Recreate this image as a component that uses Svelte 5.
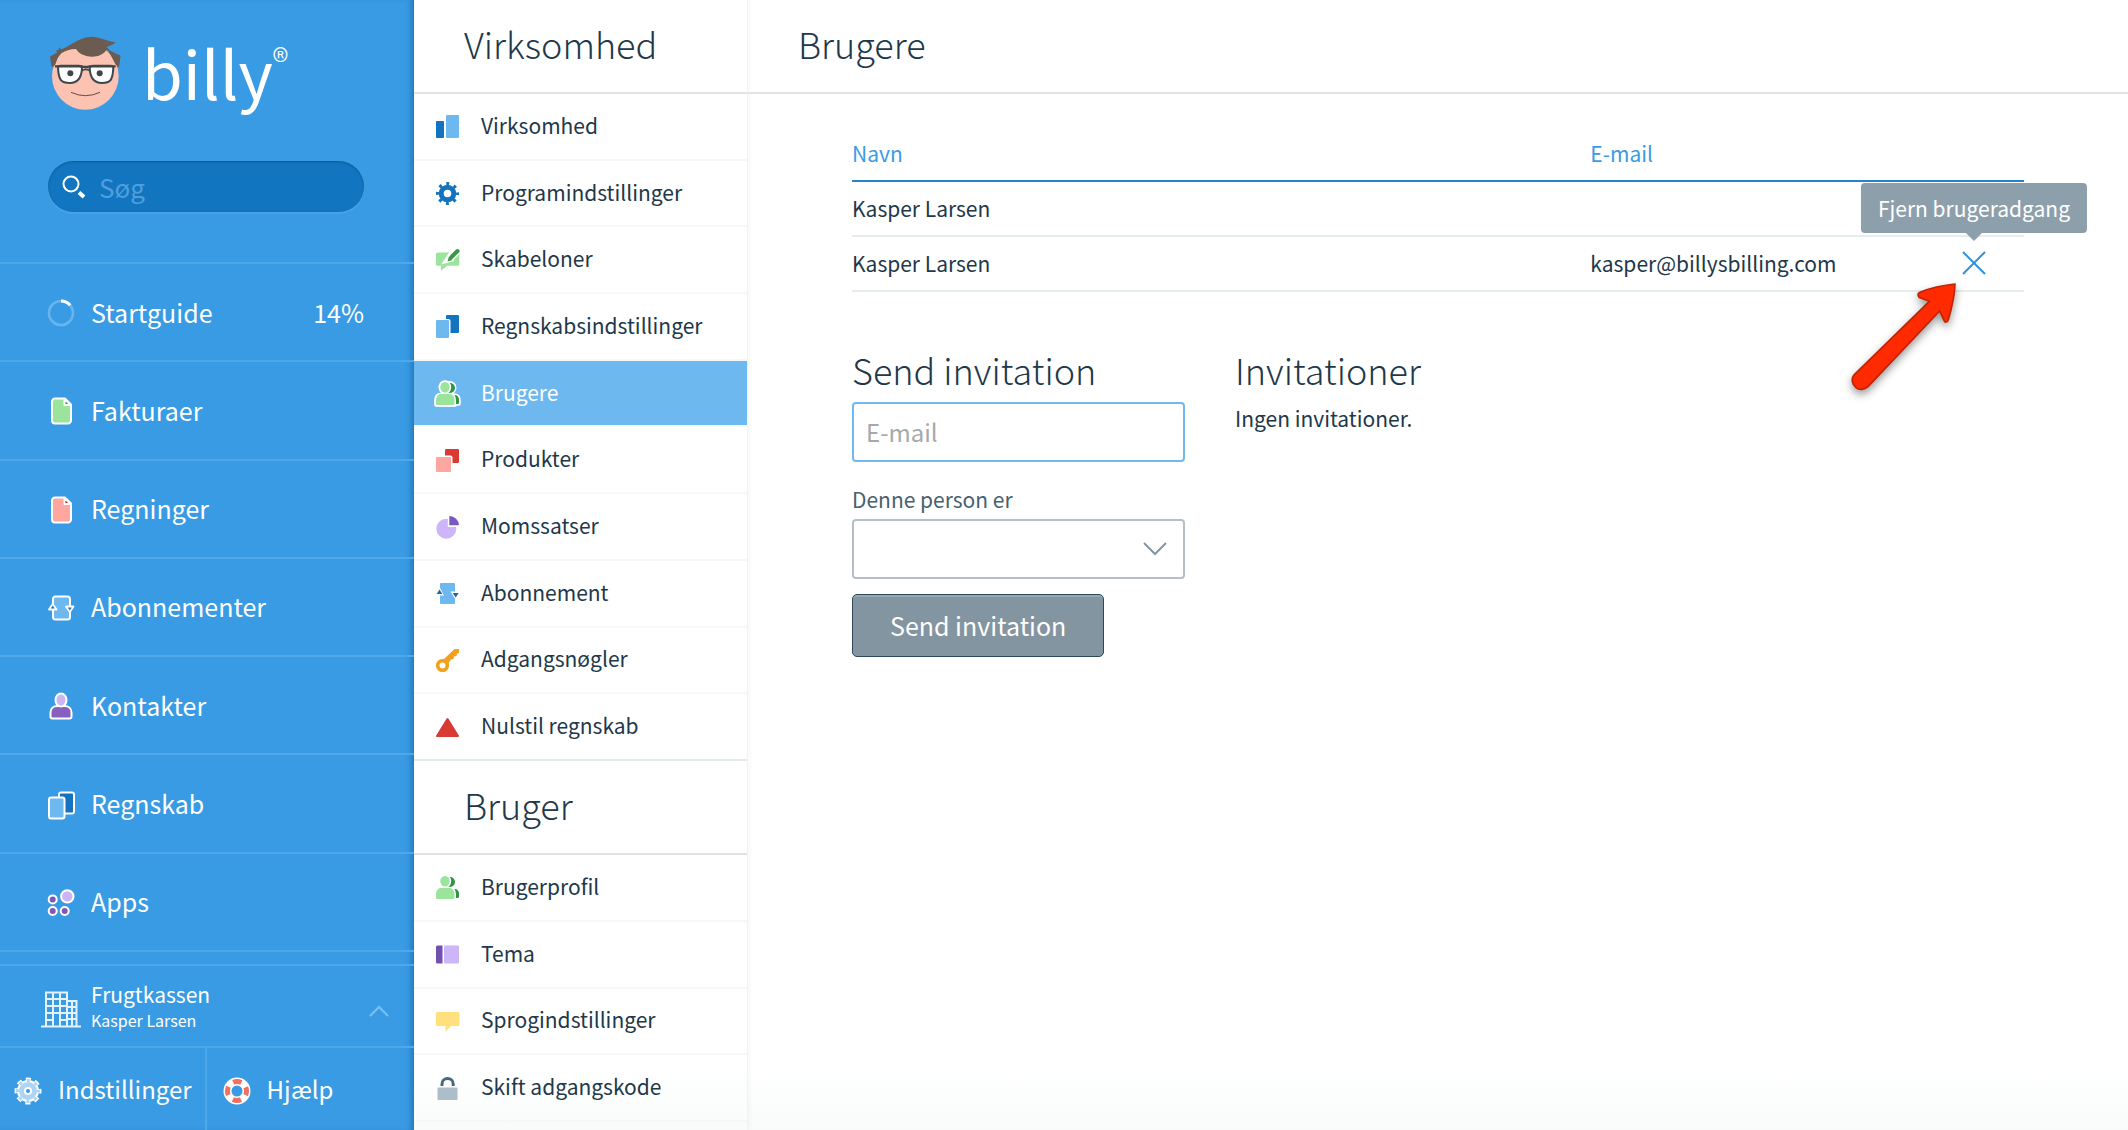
<script>
  const menu = [
    { icon: "progress", label: "Startguide", note: "14%" },
    { icon: "invoice", label: "Fakturaer" },
    { icon: "bill", label: "Regninger" },
    { icon: "subscriptions", label: "Abonnementer" },
    { icon: "contact", label: "Kontakter" },
    { icon: "accounting", label: "Regnskab" },
    { icon: "apps", label: "Apps" },
  ];

  const sections = [
    {
      title: "Virksomhed",
      items: [
        { icon: "company", label: "Virksomhed" },
        { icon: "cog", label: "Programindstillinger" },
        { icon: "templates", label: "Skabeloner" },
        { icon: "ledger", label: "Regnskabsindstillinger" },
        { icon: "users", label: "Brugere", active: true },
        { icon: "products", label: "Produkter" },
        { icon: "pie", label: "Momssatser" },
        { icon: "subscription", label: "Abonnement" },
        { icon: "key", label: "Adgangsnøgler" },
        { icon: "reset", label: "Nulstil regnskab" },
      ],
    },
    {
      title: "Bruger",
      items: [
        { icon: "users", label: "Brugerprofil" },
        { icon: "theme", label: "Tema" },
        { icon: "language", label: "Sprogindstillinger" },
        { icon: "lock", label: "Skift adgangskode" },
      ],
    },
  ];

  const users = [
    { name: "Kasper Larsen", email: "" },
    { name: "Kasper Larsen", email: "kasper@billysbilling.com", removable: true },
  ];

  let email = $state("");
  let role = $state("");
</script>

{#snippet page(fill, corner)}
  <path d="M9 2.5h10l6 6v16a3 3 0 0 1-3 3H9a3 3 0 0 1-3-3v-19a3 3 0 0 1 3-3z" fill={fill} stroke="#fff" stroke-width="2" />
  <path d="M18.500 3l6 6h-6z" fill={corner} stroke="#fff" stroke-width="2" stroke-linejoin="round" />
{/snippet}

{#snippet menuIcon(name)}
  <svg class="menu-icon" viewBox="0 0 30 30" aria-hidden="true">
    {#if name === "progress"}
      <circle cx="15" cy="15" r="12" fill="none" stroke="#68b5ee" stroke-width="2.600" />
      <path d="M15 3a12 12 0 0 1 9.200 4.300" fill="none" stroke="#fff" stroke-width="3.200" />
    {:else if name === "invoice"}
      {@render page("#9be49b", "#2f8f4a")}
    {:else if name === "bill"}
      {@render page("#fda7a0", "#c91f1f")}
    {:else if name === "subscriptions"}
      <rect x="7" y="3.500" width="17" height="23" rx="2.500" fill="#6cb8ef" stroke="#fff" stroke-width="2" />
      <path d="M3 16.500l3.700-5.500 3.800 5.500z M20 13.500h7.500l-3.700 5.500z" fill="#1272b8" stroke="#fff" stroke-width="1.800" stroke-linejoin="round" />
    {:else if name === "contact"}
      <path d="M4.500 25.500v-4c0-4 3-6.500 7-6.500h7c4 0 7 2.500 7 6.500v4a2 2 0 0 1-2 2h-17a2 2 0 0 1-2-2z" fill="#865fbf" stroke="#fff" stroke-width="2" />
      <ellipse cx="15" cy="9" rx="5.500" ry="6.500" fill="#ccb5f5" stroke="#fff" stroke-width="2" />
    {:else if name === "accounting"}
      <rect x="13" y="2.500" width="15" height="21" rx="2" fill="#1473bc" stroke="#fff" stroke-width="2" />
      <rect x="3" y="7.500" width="15.500" height="21" rx="2" fill="#6cb8ef" stroke="#fff" stroke-width="2" />
    {:else if name === "apps"}
      <g fill="#7f57b8" stroke="#fff" stroke-width="2">
        <circle cx="6.700" cy="11.400" r="4" />
        <circle cx="6.700" cy="23" r="4" />
        <circle cx="18.700" cy="23" r="4" />
        <circle cx="21.300" cy="8.400" r="6.200" fill="#ccb5f5" />
      </g>
    {:else if name === "settings"}
      <circle cx="15" cy="15" r="11.500" fill="none" stroke="#fff" stroke-width="4" stroke-dasharray="5 4.030" stroke-dashoffset="2.500" />
      <circle cx="15" cy="15" r="10" fill="#acd5f5" stroke="#fff" stroke-width="2" />
      <circle cx="15" cy="15" r="10.500" fill="none" stroke="#acd5f5" stroke-width="3" stroke-dasharray="3 5.247" stroke-dashoffset="1.500" />
      <circle cx="15" cy="15" r="3" fill="#3898e0" stroke="#fff" stroke-width="2" />
    {:else if name === "help"}
      <circle cx="15" cy="15" r="9.500" fill="none" stroke="#fff" stroke-width="8" />
      <circle cx="15" cy="15" r="9.500" fill="none" stroke="#f2705f" stroke-width="5" stroke-dasharray="8.400 6.522" stroke-dashoffset="4.200" />
    {/if}
  </svg>
{/snippet}

{#snippet settingIcon(name, outlined)}
  <svg class="setting-icon" class:outlined viewBox="0 0 24 24" aria-hidden="true">
    {#if name === "company"}
      <rect x="0" y="6" width="8" height="17" rx="1" fill="#1473bf" />
      <rect x="10" y="0" width="13" height="23" rx="1" fill="#6cb8ef" />
    {:else if name === "cog"}
      <circle cx="11.500" cy="11.500" r="6.300" fill="none" stroke="#1473bf" stroke-width="5" />
      <circle cx="11.500" cy="11.500" r="9.800" fill="none" stroke="#1473bf" stroke-width="3.400" stroke-dasharray="2.900 4.797" stroke-dashoffset="1.450" />
    {:else if name === "templates"}
      <path d="M1.500 3.500h20.300a1.500 1.500 0 0 1 1.500 1.500v10.300a1.500 1.500 0 0 1-1.500 1.500H11l-6 5v-5H1.500A1.500 1.500 0 0 1 0 15.300V5a1.500 1.500 0 0 1 1.500-1.500z" fill="#9be49b" />
      <path d="M21.500 2L15 8.500" stroke="#fff" stroke-width="7" stroke-linecap="round" />
      <path d="M13.500 5.500l-5 7.500 7.500-2z" fill="#fff" stroke="#fff" stroke-width="3" />
      <path d="M21.500 2L15.500 8" stroke="#399748" stroke-width="4" stroke-linecap="round" />
      <path d="M13 7.500l3.500 3.500-5 1.500z" fill="#399748" />
    {:else if name === "ledger"}
      <rect x="10" y="0" width="13" height="18" rx="1" fill="#1473bf" />
      <rect x="-1" y="4" width="15.500" height="21" rx="2" fill="#fff" />
      <rect x="0" y="5" width="13" height="18" rx="1" fill="#6cb8ef" />
    {:else if name === "users"}
      <g class="halo" stroke-width="3.600">
        <ellipse cx="14" cy="5.800" rx="4.700" ry="5" />
        <path d="M6 22v-3c0-4 2-6 5-6h7c3 0 5 2 5 5v4z" />
        <ellipse cx="9" cy="5.300" rx="4.700" ry="5.300" />
        <path d="M0 23v-4.500c0-4 2-6 5-6h9c3 0 5 2 5 6V23z" />
      </g>
      <ellipse cx="14" cy="6" rx="5" ry="5" fill="#2f9347" />
      <path d="M10 22v-9h8.500c3 0 4.500 2 4.500 5v2.500a1.500 1.500 0 0 1-1.500 1.500z" fill="#2f9347" />
      <g class="cut" stroke-width="3">
        <ellipse cx="9" cy="5.300" rx="4.700" ry="5.300" />
        <path d="M0 22v-3.500c0-4 2-6 5-6h8.500c3 0 5 2 5 6V23H1z" />
      </g>
      <ellipse cx="9" cy="5.300" rx="4.700" ry="5.300" fill="#9be49b" />
      <path d="M0 21.500v-3c0-4 2-6.500 5-6.500h8.500c3 0 5 2.500 5 6.500v3a1.500 1.500 0 0 1-1.500 1.500H1.500A1.500 1.500 0 0 1 0 21.500z" fill="#9be49b" />
    {:else if name === "products"}
      <rect x="9" y="0" width="14" height="14" rx="1" fill="#d93a34" />
      <rect x="-1" y="6.500" width="17.500" height="18" rx="2" fill="#fff" />
      <rect x="0" y="8" width="15" height="15" rx="1" fill="#fda7a0" />
    {:else if name === "pie"}
      <circle cx="10.300" cy="12.700" r="10" fill="#ccb5f8" />
      <path d="M11.800-1v12H24V-1z" fill="#fff" />
      <path d="M13.300 0a9.500 9.500 0 0 1 9.700 9.300h-9.700z" fill="#7b58bf" />
    {:else if name === "subscription"}
      <rect x="4" y="1" width="15" height="21" rx="1" fill="#6cb8ef" />
      <path d="M-1 13.500l4.500-8.500 4.500 8.500z M14.500 9.500h10l-5 8z" fill="#fff" />
      <path d="M.700 12l2.800-4.500 2.800 4.500z M16.700 11h6l-3 4.500z" fill="#1a69ad" />
    {:else if name === "key"}
      <circle cx="6.500" cy="16.500" r="4.800" fill="none" stroke="#f2a01e" stroke-width="3.600" />
      <path d="M7.500 10.500L18.500 0H23v4l-2 .500-.500 2.500-2.500.500-.500 2.500-2.500.500-3 4.500z" fill="#f2a01e" />
    {:else if name === "reset"}
      <path d="M11.500 3L22 20H1z" fill="#d93a34" stroke="#d93a34" stroke-width="2" stroke-linejoin="round" />
    {:else if name === "theme"}
      <path d="M1.500 2.500h5v18h-5A1.500 1.500 0 0 1 0 19V4a1.500 1.500 0 0 1 1.500-1.500z" fill="#7250b0" />
      <rect x="8" y="2.500" width="15" height="18" rx="1" fill="#ccb5f8" />
    {:else if name === "language"}
      <path d="M1.500 2h20.500a1.500 1.500 0 0 1 1.500 1.500v11a1.500 1.500 0 0 1-1.500 1.500h-7l-5.500 5.500V16h-8A1.500 1.500 0 0 1 0 14.500v-11A1.500 1.500 0 0 1 1.500 2z" fill="#ffe07c" />
    {:else if name === "lock"}
      <path d="M6 9V7a5.600 5.600 0 0 1 11.200 0V9" fill="none" stroke="#43697f" stroke-width="3" />
      <rect x="1.500" y="10.500" width="20" height="12.500" rx="1" fill="#adbec8" />
    {/if}
  </svg>
{/snippet}

<div class="app">
  <aside class="sidebar">
    <header class="brand">
      <a class="logo" href="/">
        <svg class="face" viewBox="150 108 213 225" aria-hidden="true">
          <path d="M155 200l-5-30 22-12-4-8 8 1 2-9 8 9 44-25 130 40 1 4-4 30z" fill="#6b5b50" />
          <circle cx="256" cy="229" r="100" fill="#fcc2b2" />
          <path d="M152 170l30-20-17 46-8 4zM361 168l-38-20 24 46 9 6z" fill="#6b5b50" />
          <path d="M180 150c30-10 50-36 92-40 28 0 46 13 75 17-10 10-20 10-27 15l8 8c-8 3-10 1-10 1-14 26-72 26-90-4-18 0-32 6-43 12z" fill="#6b5b50" />
          <g fill="#fff" stroke="#3d474c" stroke-width="6">
            <path d="M174 203q0-6 8-6h54q10 0 10 9c-2 30-14 43-36 43-28 0-34-10-36-46z" />
            <path d="M340 203q0-6-8-6h-52q-11 0-11 9c2 30 14 43 36 43 28 0 33-10 35-46z" />
          </g>
          <path d="M165 199h80q12 4 24 0h78" fill="none" stroke="#3d474c" stroke-width="7" />
          <path d="M246 212q11-8 23 0" fill="none" stroke="#3d474c" stroke-width="5" />
          <circle cx="211" cy="220" r="9" fill="#3d474c" />
          <circle cx="299" cy="220" r="9" fill="#3d474c" />
          <path d="M213 277q43 20 87 0" fill="none" stroke="#6b4a42" stroke-width="3" />
        </svg>
        <span class="wordmark">billy</span>
        <span class="registered">®</span>
      </a>
      <label class="search">
        <svg viewBox="0 0 24 24" aria-hidden="true">
          <circle cx="9" cy="9" r="7.500" fill="none" stroke="#fff" stroke-width="2" />
          <path d="M17 17.500l5 4.500" stroke="#fff" stroke-width="4" />
        </svg>
        <input type="search" placeholder="Søg" aria-label="Søg" />
      </label>
    </header>

    <nav class="menu">
      {#each menu as item}
        <a href="#{item.icon}">
          {@render menuIcon(item.icon)}
          <span>{item.label}</span>
          {#if item.note}
            <span class="note">{item.note}</span>
          {/if}
        </a>
      {/each}
    </nav>

    <button class="account" type="button">
      <svg class="building" viewBox="0 0 40 40" fill="none" stroke="#e3f2fd" stroke-width="2" aria-hidden="true">
        <path d="M0 37.500h40M5 37V3.500h21V37M12 3.500V37M19 3.500V37M5 10h21M5 17h21M5 24h21M5 31h7M19 31h7M26 12h9.500v25M31 12v25M26 18h9.500M26 24h9.500M26 30h9.500" />
      </svg>
      <span class="account-text">
        <span>Frugtkassen</span>
        <small>Kasper Larsen</small>
      </span>
      <svg class="caret" viewBox="0 0 20 12" fill="none" stroke="#7cc0f3" stroke-width="2" aria-hidden="true">
        <path d="M1 11l9-9 9 9" />
      </svg>
    </button>

    <footer class="tools">
      <a href="#settings">{@render menuIcon("settings")}Indstillinger</a>
      <a href="#help">{@render menuIcon("help")}Hjælp</a>
    </footer>
  </aside>

  <div class="settings">
    {#each sections as section}
      <section>
        <h2 class="title">{section.title}</h2>
        <ul class:long={section.items.length > 4}>
          {#each section.items as item}
            <li>
              <a href="#{item.icon}" class:active={item.active}>
                {@render settingIcon(item.icon, item.active)}
                {item.label}
              </a>
            </li>
          {/each}
        </ul>
      </section>
    {/each}
  </div>

  <main>
    <h1 class="title">Brugere</h1>
    <div class="content">
      <table>
        <thead>
          <tr>
            <th class="name">Navn</th>
            <th>E-mail</th>
            <th class="actions" aria-label="Handlinger"></th>
          </tr>
        </thead>
        <tbody>
          {#each users as user}
            <tr>
              <td>{user.name}</td>
              <td>{user.email}</td>
              <td class="actions">
                {#if user.removable}
                  <div class="remove">
                    <button type="button" aria-describedby="remove-tip" aria-label="Fjern">
                      <svg viewBox="0 0 24 24" aria-hidden="true">
                        <path d="M1 1l22 22M23 1L1 23" stroke="#2e92de" stroke-width="2" />
                      </svg>
                    </button>
                    <span class="tooltip" id="remove-tip" role="tooltip">Fjern brugeradgang</span>
                    <svg class="pointer" viewBox="205 482 339 351" aria-hidden="true">
                      <path
                        d="M526 494c-38 4-76 12-105 25-9 4-7 14 2 17l26 10L224 766c-12 14-5 30 5 39s26 6 36-3L480 575l13 28c3 8 11 6 13-2 10-34 19-70 20-107z"
                        fill="#ff2a00"
                        stroke="#bf2408"
                        stroke-width="5"
                        stroke-linejoin="round" />
                    </svg>
                  </div>
                {/if}
              </td>
            </tr>
          {/each}
        </tbody>
      </table>

      <div class="columns">
        <form onsubmit={(e) => e.preventDefault()}>
          <h2>Send invitation</h2>
          <input class="field focused" type="email" placeholder="E-mail" aria-label="E-mail" bind:value={email} />
          <label for="role">Denne person er</label>
          <div class="select">
            <select class="field" id="role" bind:value={role}>
              <option value=""></option>
            </select>
            <svg viewBox="0 0 24 14" aria-hidden="true">
              <path d="M1 1l11 11L23 1" fill="none" stroke="#8496a1" stroke-width="2" />
            </svg>
          </div>
          <button class="submit" type="submit">Send invitation</button>
        </form>
        <section>
          <h2>Invitationer</h2>
          <p>Ingen invitationer.</p>
        </section>
      </div>
    </div>
  </main>
</div>

<style>
  :global(body) {
    background: #fff;
  }

  .app {
    display: flex;
    min-height: 100vh;
    font-family: "Noto Sans CJK JP", "Noto Sans", sans-serif;
    font-size: 21px;
    line-height: 28px;
    color: #22384a;
    background: linear-gradient(to top, #f9fbfb, #fff 60px);
  }

  .app *,
  .app *::before,
  .app *::after {
    box-sizing: border-box;
  }

  a {
    color: inherit;
    text-decoration: none;
  }

  h1,
  h2,
  p,
  ul {
    margin: 0;
    padding: 0;
  }

  h1,
  h2 {
    font-weight: 300;
  }

  ul {
    list-style: none;
  }

  input,
  select,
  button {
    font: inherit;
    color: inherit;
  }

  svg {
    flex: none;
    display: block;
    overflow: visible;
  }

  /* blue sidebar */
  .sidebar {
    flex: none;
    display: flex;
    flex-direction: column;
    width: 414px;
    color: #fff;
    font-size: 25px;
    background: #399be3;
    box-shadow: inset -6px 0 6px -4px rgba(10, 70, 130, 0.5);
  }

  .brand {
    padding: 36px 50px 50px 48px;
  }

  .logo {
    display: flex;
    align-items: flex-start;
    height: 125px;
  }

  .face {
    width: 71px;
    height: 75px;
    margin: 0 21px 0 2px;
  }

  .wordmark {
    font-size: 66px;
    line-height: 70px;
  }

  .registered {
    font-size: 34px;
    font-weight: 300;
    line-height: 48px;
  }

  .search {
    display: flex;
    align-items: center;
    gap: 13px;
    height: 51px;
    padding: 0 14px;
    border-radius: 26px;
    background: #1275bf;
    box-shadow: inset 0 1px 2px rgba(0, 50, 110, 0.4), 0 2px 0 rgba(255, 255, 255, 0.08);
  }

  .search svg {
    width: 24px;
    height: 24px;
  }

  .search input {
    flex: 1;
    min-width: 0;
    height: 48px;
    padding: 0;
    border: 0;
    outline: 0;
    background: none;
    font-size: 26px;
    line-height: 44px;
    appearance: none;
  }

  .search input::placeholder {
    color: #4f9fdc;
    line-height: 44px;
    opacity: 1;
  }

  .menu {
    flex: 1;
    display: flex;
    flex-direction: column;
    margin-bottom: 12px;
    border-bottom: 2px solid #4da8ea;
  }

  .menu a {
    flex: 1;
    display: flex;
    align-items: center;
    gap: 15px;
    padding: 0 50px 1px 46px;
    border-top: 2px solid #4da8ea;
  }

  .note {
    margin-left: auto;
  }

  .menu-icon {
    width: 30px;
    height: 30px;
    margin-top: 3px;
  }

  .account {
    display: flex;
    align-items: center;
    gap: 10px;
    height: 82px;
    padding: 0 25px 0 41px;
    border: 0;
    border-top: 2px solid #4da8ea;
    background: none;
    text-align: left;
  }

  .building {
    width: 40px;
    height: 40px;
    margin-top: 6px;
  }

  .account-text {
    flex: 1;
    display: flex;
    flex-direction: column;
    font-size: 21px;
    line-height: 28px;
  }

  .account small {
    font-size: 16px;
    line-height: 24px;
  }

  .caret {
    width: 20px;
    height: 12px;
    margin-top: 10px;
  }

  .tools {
    display: flex;
    height: 84px;
    border-top: 2px solid #4da8ea;
    font-size: 24px;
  }

  .tools a {
    display: flex;
    align-items: center;
    gap: 15px;
    padding: 0 13px;
  }

  .tools a + a {
    padding: 0 15px;
    border-left: 2px solid #4da8ea;
  }

  /* settings list */
  .settings {
    flex: none;
    width: 334px;
    border-right: 1px solid #f0f2f3;
    box-shadow: 2px 0 5px rgba(0, 0, 0, 0.03);
  }

  .title {
    height: 94px;
    padding: 0 50px;
    border-bottom: 2px solid #e0e3e5;
    font-size: 36px;
    line-height: 86px;
  }

  .settings ul {
    display: grid;
    grid-auto-rows: 1fr;
    min-height: 267px;
  }

  .settings ul.long {
    min-height: 667px;
  }

  .settings li {
    display: flex;
    border-bottom: 2px solid #f5f7f8;
  }

  .settings .long li:last-child {
    border-color: #e3ebed;
  }

  .settings li a {
    flex: 1;
    display: flex;
    align-items: center;
    gap: 21px;
    padding: 0 22px 3px;
  }

  .settings .active {
    color: #fff;
    background: #6cb8ef;
  }

  .setting-icon {
    width: 24px;
    height: 24px;
    margin-top: 5px;
  }

  .halo {
    fill: none;
    stroke: none;
  }

  .cut {
    fill: #fff;
    stroke: #fff;
  }

  .outlined .halo {
    fill: #fff;
    stroke: #fff;
    stroke-linejoin: round;
  }

  /* main area */
  main {
    flex: 1;
    min-width: 0;
  }

  .content {
    padding: 32px 104px;
  }

  table {
    width: 100%;
    border-collapse: collapse;
    text-align: left;
  }

  th,
  td {
    height: 55px;
    padding: 0 0 1px;
    font-weight: 400;
    border-bottom: 2px solid #e6eded;
  }

  th {
    padding: 0;
    color: #3b9be2;
    border-color: #2583c9;
  }

  .name {
    width: 63%;
  }

  .actions {
    width: 88px;
    padding-right: 38px;
  }

  .remove {
    position: relative;
    width: 24px;
    margin-left: auto;
  }

  .remove button {
    display: block;
    width: 24px;
    height: 24px;
    padding: 0;
    border: 0;
    background: none;
  }

  .tooltip {
    position: absolute;
    bottom: 42px;
    left: 50%;
    padding: 11px 17px;
    border-radius: 4px;
    color: #fff;
    white-space: nowrap;
    background: #8d9fab;
    transform: translateX(-50%);
  }

  .tooltip::after {
    content: "";
    position: absolute;
    top: 100%;
    left: 50%;
    margin-left: -8px;
    border: 8px solid transparent;
    border-top-color: #8d9fab;
    border-bottom: 0;
  }

  .pointer {
    position: absolute;
    top: 29px;
    right: 25px;
    width: 113px;
    height: 117px;
    filter: drop-shadow(0 4px 4px rgba(0, 0, 0, 0.4));
  }

  .columns {
    display: flex;
    gap: 50px;
    margin-top: 53px;
  }

  .columns h2 {
    font-size: 36px;
    line-height: 48px;
    margin-bottom: 9px;
  }

  .columns p {
    padding-top: 2px;
  }

  form {
    display: flex;
    flex-direction: column;
    align-items: flex-start;
    width: 333px;
  }

  .field {
    width: 100%;
    height: 60px;
    padding: 0 12px 2px;
    border: 2px solid #b3c0c7;
    border-radius: 4px;
    outline: 0;
    background: #fff;
    font-size: 24px;
  }

  .focused {
    border-color: #6fb9f0;
  }

  .field::placeholder {
    color: #a5a9ac;
    opacity: 1;
  }

  form label {
    margin: 23px 0 6px;
    color: #47616f;
  }

  .select {
    display: grid;
    align-items: center;
    width: 100%;
  }

  .select > * {
    grid-area: 1 / 1;
  }

  .select select {
    appearance: none;
  }

  .select svg {
    width: 24px;
    height: 14px;
    margin-right: 18px;
    justify-self: end;
    pointer-events: none;
  }

  .submit {
    height: 63px;
    margin-top: 15px;
    padding: 0 37px 2px;
    border: 1px solid #2c4a57;
    border-radius: 5px;
    color: #fff;
    font-size: 25px;
    background: #8395a1;
    box-shadow: inset 0 2px 0 #93a9b3;
  }
</style>
